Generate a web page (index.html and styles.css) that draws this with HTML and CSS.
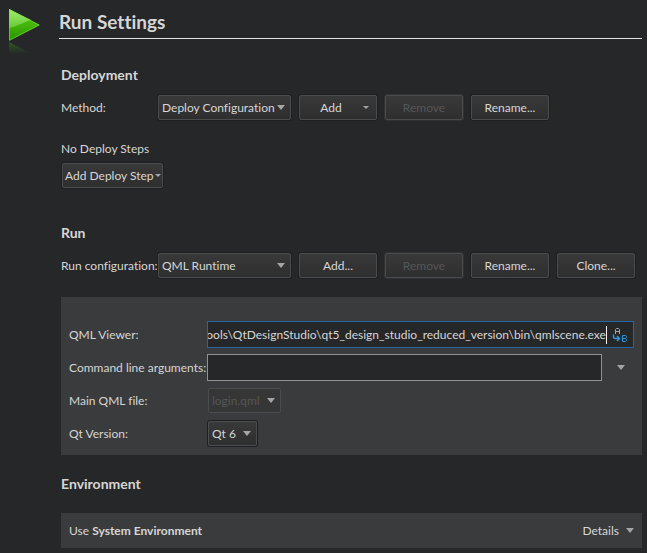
FILE: index.html
```html
<!DOCTYPE html>
<html lang="en">
<head>
<meta charset="utf-8">
<meta name="viewport" content="width=device-width, initial-scale=1">
<title>Run Settings</title>
<link rel="stylesheet" href="styles.css">
<script src="main.js" defer></script>
</head>
<body>
<div class="page">
  <svg class="run-icon" width="34" height="50" viewBox="0 0 34 50" aria-hidden="true">
    <defs>
      <linearGradient id="base" x1="0" y1="0" x2="0" y2="1">
        <stop offset="0" stop-color="#4fc414"/><stop offset=".5" stop-color="#45b508"/><stop offset="1" stop-color="#249100"/>
      </linearGradient>
      <linearGradient id="shine" x1="0" y1="0" x2="0" y2="1">
        <stop offset="0" stop-color="#a0ee68"/><stop offset="1" stop-color="#66c93c"/>
      </linearGradient>
      <linearGradient id="fade" x1="0" y1="0" x2="0" y2="1">
        <stop offset="0" stop-color="#3b8a20" stop-opacity=".5"/><stop offset="1" stop-color="#3b8a20" stop-opacity="0"/>
      </linearGradient>
    </defs>
    <path d="M1 1 32 17 1 33Z" fill="url(#base)"/>
    <path d="M1 1 23 12C16 14 10 18 1 20Z" fill="url(#shine)"/>
    <path d="M1.500 1.800 31 17 1.500 32.200Z" fill="none" stroke="#7be03c" stroke-opacity=".6"/>
    <path d="M1 34 24 46H1Z" fill="url(#fade)"/>
  </svg>
  <main class="content">
    <h1>Run Settings</h1>

    <section class="deployment">
      <h2>Deployment</h2>
      <div class="toolbar">
        <label class="toolbar-label" for="method">Method:</label>
        <span class="select wide"><select id="method"><option>Deploy Configuration</option></select></span>
        <button class="button menu">Add</button>
        <button class="button" disabled>Remove</button>
        <button class="button">Rename...</button>
      </div>
      <p class="steps">No Deploy Steps</p>
      <button class="button add-step">Add Deploy Step</button>
    </section>

    <section class="run">
      <h2>Run</h2>
      <div class="toolbar">
        <label class="toolbar-label" for="config">Run configuration:</label>
        <span class="select wide"><select id="config"><option>QML Runtime</option></select></span>
        <button class="button">Add...</button>
        <button class="button" disabled>Remove</button>
        <button class="button">Rename...</button>
        <button class="button">Clone...</button>
      </div>
      <div class="panel form">
        <label for="viewer">QML Viewer:</label>
        <div class="field focused">
          <input id="viewer" type="text" value="\Tools\QtDesignStudio\qt5_design_studio_reduced_version\bin\qmlscene.exe">
          <button class="variables" aria-label="Insert variable">
            <svg width="16" height="16" viewBox="0 0 16 16" fill="none">
              <path d="M3.500 7V2.500L4.500 1.500H6.500L7.500 2.500V7M3.500 4.500H7.500" stroke="#a5a6a7"/>
              <path d="M1.500 7.500V9.500Q1.500 11.500 3.500 11.500H7M5 9 7.500 11.500 5 14" stroke="#3096dc" stroke-width="1.500"/>
              <path d="M10.500 8.500V14.500H13.500L14.500 13.500V12.500L13.500 11.500H10.500M13.500 11.500 14.500 10.500V9.500L13.500 8.500H10.500" stroke="#3096dc"/>
            </svg>
          </button>
        </div>
        <label for="args">Command line arguments:</label>
        <div class="args">
          <div class="field"><input id="args" type="text"></div>
          <button class="expander arrow" aria-label="Expand"></button>
        </div>
        <label for="main-file">Main QML file:</label>
        <span class="select fit"><select id="main-file" disabled><option>login.qml</option></select></span>
        <label for="qt">Qt Version:</label>
        <span class="select fit"><select id="qt"><option>Qt 6</option></select></span>
      </div>
    </section>

    <section class="environment">
      <h2>Environment</h2>
      <div class="panel summary">
        <span>Use <b>System Environment</b></span>
        <button class="details arrow">Details</button>
      </div>
    </section>
  </main>
</div>
</body>
</html>
```
FILE: main.js
```js
// Keep the end of a long path in view.
const viewer = document.getElementById("viewer");
viewer.scrollLeft = viewer.scrollWidth;
```
FILE: styles.css
```css
* {
  box-sizing: border-box;
}

body {
  margin: 0;
  background: #262729;
  color: #d6d6d6;
  font: 12px/16px Lato, "Liberation Sans", sans-serif;
  font-variant-ligatures: none;
}

button,
input,
select {
  margin: 0;
  font: inherit;
  font-variant-ligatures: none;
  color: inherit;
}

label {
  white-space: nowrap;
}

.page {
  display: flex;
  padding: 8px 5px 5px 8px;
}

.run-icon {
  flex: none;
  margin-right: 17px;
}

.content {
  flex: 1;
  min-width: 0;
}

h1 {
  margin: 0;
  padding-bottom: 2px;
  border-bottom: 1px solid #e4e4e4;
  font-size: 19px;
  line-height: 28px;
  font-weight: 700;
}

h2 {
  margin: 0;
  font-size: 14px;
  line-height: 20px;
  font-weight: 700;
}

section {
  margin-left: 2px;
}

.deployment {
  padding-top: 26px;
}

.run {
  padding-top: 35px;
}

.environment {
  padding-top: 19px;
}

.toolbar {
  display: flex;
  align-items: center;
  gap: 8px;
  margin-top: 10px;
}

.toolbar-label {
  width: 89px;
}

.button,
.select select {
  height: 25px;
  border: 1px solid #4b4c4d;
  border-radius: 2px;
  background: linear-gradient(#393939, #2e2e2e);
  box-shadow: 0 0 0 1px #1e1f20;
}

.button {
  position: relative;
  width: 78px;
  padding: 0;
}

.button:disabled {
  color: #555657;
  box-shadow: 0 0 0 1px #303132;
}

.select {
  position: relative;
  display: flex;
}

.select select {
  width: 100%;
  padding: 0 20px 0 3px;
  appearance: none;
}

.select select:disabled {
  color: #555657;
  opacity: 1;
  background: #363636;
  box-shadow: none;
}

.wide {
  width: 133px;
}

.wide select {
  padding-right: 12px;
}

.fit {
  justify-self: start;
  margin-left: 1px;
}

.select::after,
.menu::after,
.add-step::after,
.arrow::after {
  content: "";
  width: 8px;
  height: 5px;
  background: #a5a5a5;
  clip-path: polygon(0 0, 100% 0, 50% 100%);
}

.select::after {
  position: absolute;
  right: 6px;
  top: 10px;
  pointer-events: none;
}

.menu {
  padding-right: 14px;
}

.menu::after,
.add-step::after {
  position: absolute;
  right: 7px;
  top: 10px;
  width: 6px;
  height: 3px;
}

.add-step::after {
  right: 1px;
}

.steps {
  margin: 21px 0 6px;
}

.add-step {
  display: block;
  width: 101px;
  margin-left: 1px;
  padding-left: 2px;
  text-align: left;
}

.panel {
  background: #3a3b3c;
}

.form {
  display: grid;
  grid-template-columns: 138px 1fr;
  grid-auto-rows: 27px;
  align-items: center;
  row-gap: 6px;
  margin-top: 19px;
  padding: 24px 8px 8px;
}

.field {
  display: flex;
  align-items: center;
  flex: 1;
  height: 27px;
  min-width: 0;
  border: 1px solid #909192;
  background: #262729;
}

.field input {
  flex: 1;
  min-width: 0;
  height: 18px;
  padding: 0;
  border: 0;
  outline: 0;
  background: transparent;
}

.focused {
  border-color: #2865a8;
}

.focused input {
  border-right: 1px solid #f0f0f0;
}

.variables {
  display: flex;
  padding: 0;
  margin: 0 5px;
  border: 0;
  background: none;
}

.args {
  display: flex;
}

.expander {
  display: flex;
  align-items: center;
  justify-content: center;
  width: 32px;
  padding: 0 0 0 6px;
  border: 0;
  background: none;
}

.summary {
  display: flex;
  align-items: center;
  justify-content: space-between;
  height: 35px;
  margin-top: 19px;
  padding: 0 8px;
}

.details {
  display: flex;
  align-items: center;
  gap: 7px;
  padding: 0;
  border: 0;
  background: none;
}
```
